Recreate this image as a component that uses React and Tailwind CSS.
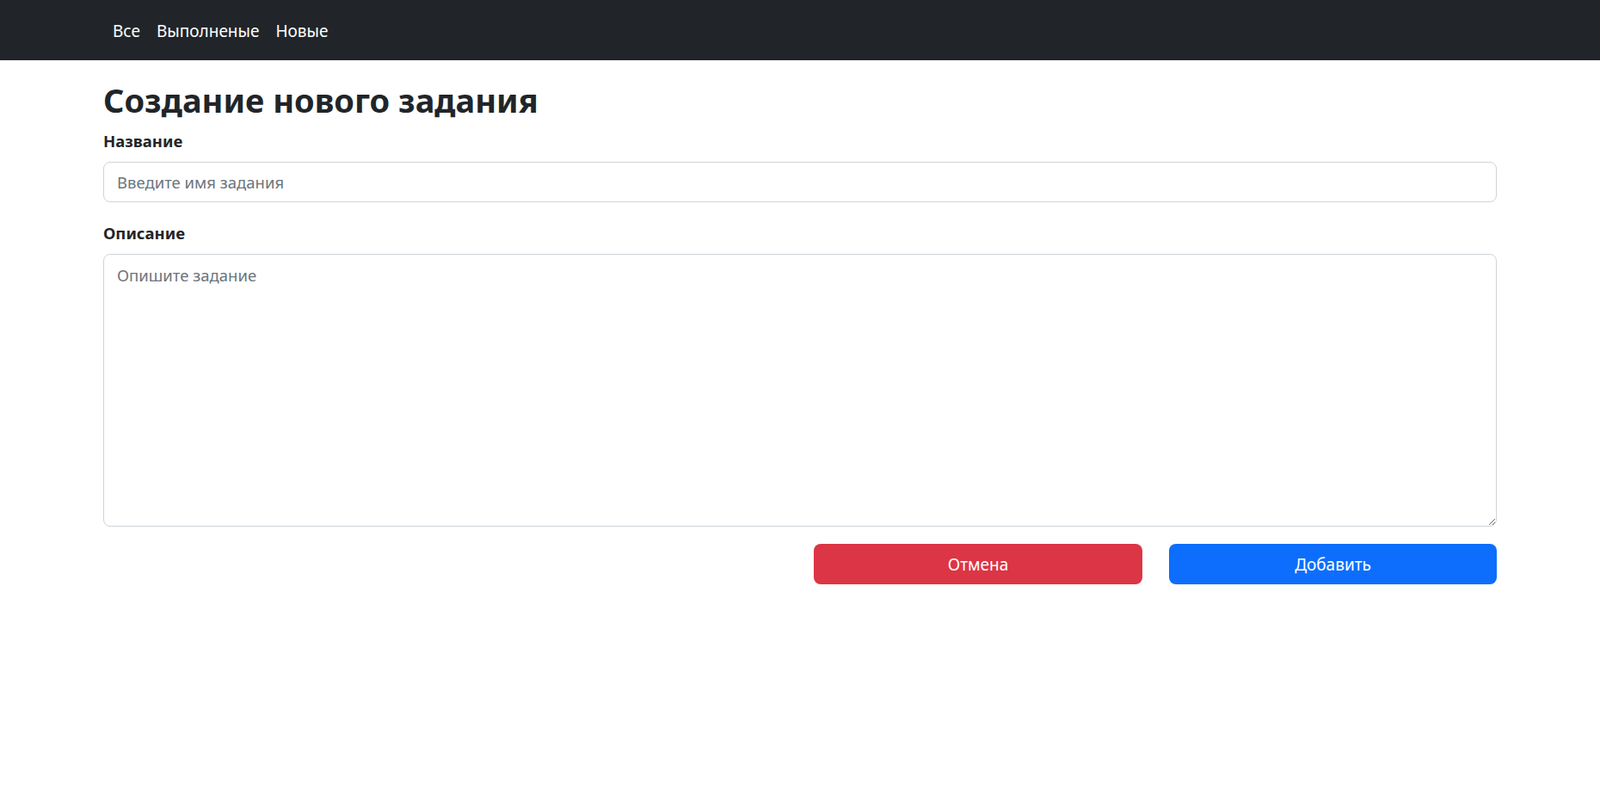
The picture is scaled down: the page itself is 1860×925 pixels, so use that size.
export default function App() {
  return (
    <div className="min-h-screen bg-white text-[#212529] font-['Noto_Sans',sans-serif]">
      <nav className="h-[70px] bg-[#212529] flex items-center">
        <div className="flex items-center gap-[19px] pl-[131px] pt-[3px] text-[19px] text-white">
          <a href="#">Все</a>
          <a href="#">Выполненые</a>
          <a href="#">Новые</a>
        </div>
      </nav>
      <div className="px-[120px]">
        <h1 className="mt-[22px] h-[48px] text-[38px] leading-[48px] font-bold">
          Создание нового задания
        </h1>
        <form className="mt-[12px]">
          <label className="block h-[24px] mb-[12px] text-[18.5px] leading-[24px] font-bold">
            Название
          </label>
          <input
            type="text"
            placeholder="Введите имя задания"
            className="block w-full h-[47px] px-[15px] text-[18.5px] border border-[#ced4da] rounded-[8px] outline-none placeholder:text-[#6c757d]"
          />
          <label className="block h-[24px] mt-[24px] mb-[12px] text-[18.5px] leading-[24px] font-bold">
            Описание
          </label>
          <textarea
            placeholder="Опишите задание"
            className="block w-full h-[317px] px-[15px] pt-[9px] pb-[7px] text-[18.5px] leading-[30px] border border-[#ced4da] rounded-[8px] outline-none placeholder:text-[#6c757d]"
          />
          <div className="flex justify-end gap-[31px] mt-[20px]">
            <button
              type="button"
              className="w-[382px] h-[47px] pt-[2px] rounded-[8px] bg-[#dc3545] text-white text-[19px]"
            >
              Отмена
            </button>
            <button
              type="submit"
              className="w-[381px] h-[47px] pt-[2px] rounded-[8px] bg-[#0d6efd] text-white text-[19px]"
            >
              Добавить
            </button>
          </div>
        </form>
      </div>
    </div>
  );
}
